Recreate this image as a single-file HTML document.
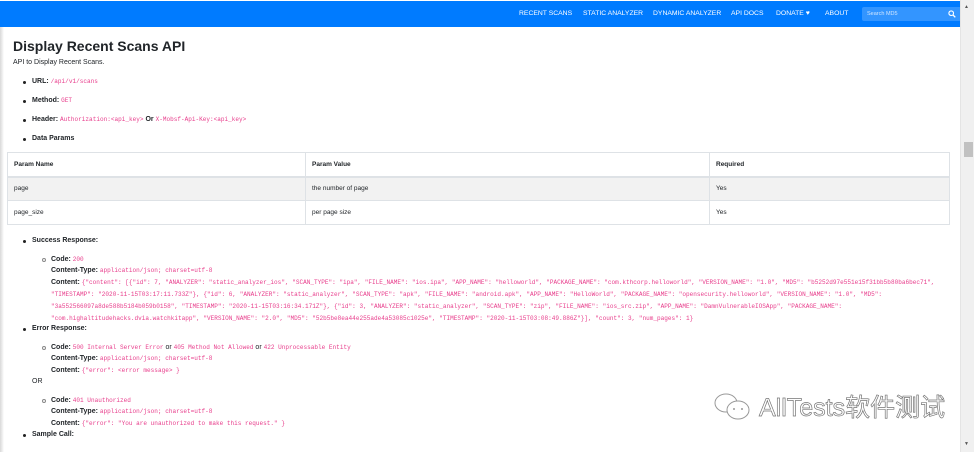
<!DOCTYPE html>
<html><head><meta charset="utf-8"><style>
*{margin:0;padding:0;box-sizing:border-box}
body{width:974px;height:452px;overflow:hidden;background:#fff;font-family:"Liberation Sans",sans-serif;color:#212529;position:relative;font-size:7px}
.nav{position:absolute;left:0;top:1px;width:960px;height:26px;background:#007bff}
.nav a{position:absolute;top:9px;color:#fff;font-size:6.8px;text-decoration:none;letter-spacing:0}
.search{position:absolute;left:862px;top:6px;width:99px;height:14px;background:#3395ff;border-radius:2px;color:#d0e6ff;font-size:5.5px;padding:4px 0 0 5px}
.shadow{position:absolute;left:0;top:27px;width:4px;height:425px;background:linear-gradient(90deg,#d8d8d8,#fff)}
.sb{position:absolute;left:960px;top:0;width:14px;height:452px;background:#f0f0f0;border-left:1px solid #e4e4e4}
.thumb{position:absolute;left:964px;top:142px;width:9px;height:15px;background:#c1c1c1}
h1{position:absolute;left:13px;top:38px;font-size:14px;font-weight:bold;color:#212529}
.t{position:absolute;white-space:nowrap}
code{font-family:"Liberation Mono",monospace;color:#e83e8c;font-size:6.05px}
b{font-weight:bold}
.dot{position:absolute;width:3px;height:3px;background:#222;border-radius:50%}
.circ{position:absolute;width:4px;height:4px;border:1px solid #888;border-radius:50%}
table{position:absolute;left:7px;top:152px;width:943px;border-collapse:collapse;font-size:6.5px}
td,th{border:1px solid #dee2e6;padding:0 6px;text-align:left;height:24px}
th{font-weight:bold;border-bottom:2px solid #dee2e6}
tr.g td{background:#f2f2f2}
.wm{position:absolute;left:759px;top:388px;font-size:25px;color:#fff;font-family:"Liberation Sans","Noto Sans CJK SC",sans-serif;-webkit-text-stroke:0.7px #777}
</style></head><body>
<div class="nav">
<a style="left:519px">RECENT SCANS</a>
<a style="left:583px">STATIC ANALYZER</a>
<a style="left:653px">DYNAMIC ANALYZER</a>
<a style="left:731px">API DOCS</a>
<a style="left:776px">DONATE ♥</a>
<a style="left:825px">ABOUT</a>
<div class="search">Search MD5<svg style="position:absolute;right:5px;top:3px" width="8" height="8" viewBox="0 0 8 8"><circle cx="3.2" cy="3.2" r="2.3" fill="none" stroke="#fff" stroke-width="1.1"/><path d="M5 5L7.3 7.3" stroke="#fff" stroke-width="1.3"/></svg></div>
</div>
<div class="shadow"></div>
<div class="sb"></div><div class="thumb"></div>
<div class="t" style="left:964px;top:4px;font-size:5px;color:#555">▲</div>
<div class="t" style="left:964px;top:441px;font-size:5px;color:#555">▼</div>
<h1>Display Recent Scans API</h1>
<div class="t" style="left:13px;top:59px">API to Display Recent Scans.</div>

<div class="dot" style="left:23px;top:81px"></div><div class="t" style="left:32px;top:78px"><b>URL:</b> <code>/api/v1/scans</code></div>
<div class="dot" style="left:23px;top:100px"></div><div class="t" style="left:32px;top:97px"><b>Method:</b> <code>GET</code></div>
<div class="dot" style="left:23px;top:119px"></div><div class="t" style="left:32px;top:116px"><b>Header:</b> <code>Authorization:&lt;api_key&gt;</code> <b>Or</b> <code>X-Mobsf-Api-Key:&lt;api_key&gt;</code></div>
<div class="dot" style="left:23px;top:138px"></div><div class="t" style="left:32px;top:135px"><b>Data Params</b></div>

<table>
<tr><th style="width:298px">Param Name</th><th style="width:404px">Param Value</th><th>Required</th></tr>
<tr class="g"><td>page</td><td>the number of page</td><td>Yes</td></tr>
<tr><td>page_size</td><td>per page size</td><td>Yes</td></tr>
</table>

<div class="dot" style="left:23px;top:240px"></div><div class="t" style="left:32px;top:237px"><b>Success Response:</b></div>
<div class="circ" style="left:42px;top:258px"></div><div class="t" style="left:51px;top:256px"><b>Code:</b> <code>200</code></div>
<div class="t" style="left:51px;top:267px"><b>Content-Type:</b> <code>application/json; charset=utf-8</code></div>
<div class="t" style="left:51px;top:279px"><b>Content:</b> <code>{"content": [{"id": 7, "ANALYZER": "static_analyzer_ios", "SCAN_TYPE": "ipa", "FILE_NAME": "ios.ipa", "APP_NAME": "helloworld", "PACKAGE_NAME": "com.kthcorp.helloworld", "VERSION_NAME": "1.0", "MD5": "b5252d97e551e15f31bb5b80ba6bec71",</code></div>
<div class="t" style="left:51px;top:291px"><code>"TIMESTAMP": "2020-11-15T03:17:11.733Z"}, {"id": 6, "ANALYZER": "static_analyzer", "SCAN_TYPE": "apk", "FILE_NAME": "android.apk", "APP_NAME": "HelloWorld", "PACKAGE_NAME": "opensecurity.helloworld", "VERSION_NAME": "1.0", "MD5":</code></div>
<div class="t" style="left:51px;top:303px"><code>"3a552566097a8de588b5184b059b0158", "TIMESTAMP": "2020-11-15T03:16:34.171Z"}, {"id": 3, "ANALYZER": "static_analyzer", "SCAN_TYPE": "zip", "FILE_NAME": "ios_src.zip", "APP_NAME": "DamnVulnerableIOSApp", "PACKAGE_NAME":</code></div>
<div class="t" style="left:51px;top:315px"><code>"com.highaltitudehacks.dvia.watchkitapp", "VERSION_NAME": "2.0", "MD5": "52b5be8ea44e255ade4a53085c1025e", "TIMESTAMP": "2020-11-15T03:08:49.886Z"}], "count": 3, "num_pages": 1}</code></div>
<div class="dot" style="left:23px;top:328px"></div><div class="t" style="left:32px;top:325px"><b>Error Response:</b></div>
<div class="circ" style="left:42px;top:346px"></div><div class="t" style="left:51px;top:344px"><b>Code:</b> <code>500 Internal Server Error</code> or <code>405 Method Not Allowed</code> or <code>422 Unprocessable Entity</code></div>
<div class="t" style="left:51px;top:355px"><b>Content-Type:</b> <code>application/json; charset=utf-8</code></div>
<div class="t" style="left:51px;top:367px"><b>Content:</b> <code>{"error": &lt;error message&gt; }</code></div>
<div class="t" style="left:32px;top:378px">OR</div>
<div class="circ" style="left:42px;top:399px"></div><div class="t" style="left:51px;top:397px"><b>Code:</b> <code>401 Unauthorized</code></div>
<div class="t" style="left:51px;top:408px"><b>Content-Type:</b> <code>application/json; charset=utf-8</code></div>
<div class="t" style="left:51px;top:420px"><b>Content:</b> <code>{"error": "You are unauthorized to make this request." }</code></div>
<div class="dot" style="left:23px;top:434px"></div><div class="t" style="left:32px;top:431px"><b>Sample Call:</b></div>

<svg style="position:absolute;left:713px;top:392px" width="42" height="32" viewBox="0 0 42 32"><ellipse cx="13" cy="11" rx="11" ry="9" fill="#fff" stroke="#999" stroke-width="1"/><ellipse cx="25" cy="18" rx="11" ry="9" fill="#fff" stroke="#999" stroke-width="1"/><circle cx="21" cy="17" r="1" fill="#999"/><circle cx="29" cy="17" r="1" fill="#999"/></svg>
<div class="wm">AllTests软件测试</div>
</body></html>
